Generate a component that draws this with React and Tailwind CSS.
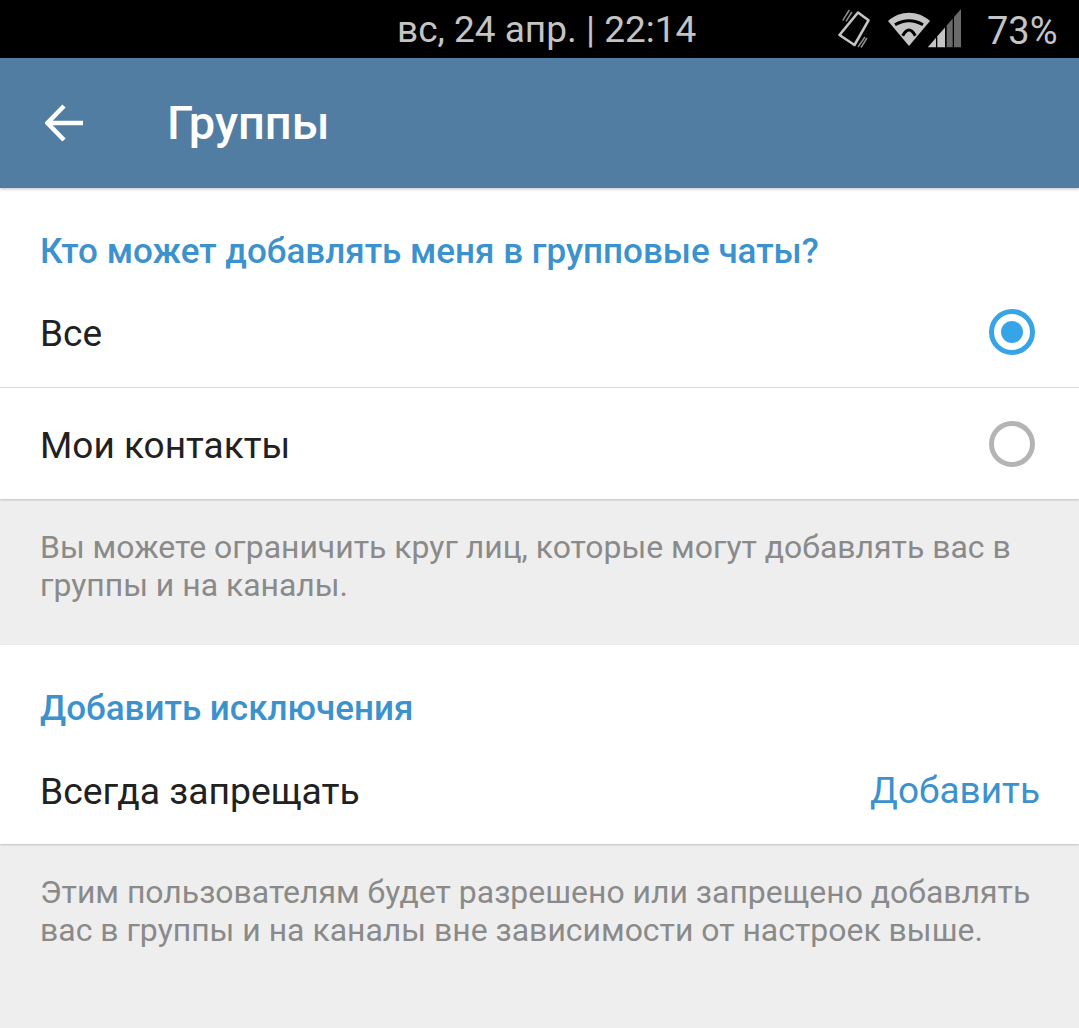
import React from 'react';

const font = { fontFamily: 'Roboto, sans-serif' };

function StatusBar() {
  return (
    <div className="relative h-[58px] bg-black text-[#c4c4c4] flex items-center">
      <div className="w-full pl-[397px] text-[37px] leading-none">вс, 24 апр. | 22:14</div>
      {/* vibrate icon */}
      <svg className="absolute left-[836px] top-[8px]" width="36" height="42" viewBox="0 0 36 42" fill="none">
        <path d="M22 4.5 L32.5 12.3 L18.5 37 L3.5 27 Z" stroke="#c4c4c4" strokeWidth="2.6" strokeLinejoin="round" />
        <path d="M6.7 12.7 L13.3 2 M10 13.3 L16 4 M22 39 L29 29 M25 39.5 L31 30" stroke="#8c8c8c" strokeWidth="1.5" />
      </svg>
      {/* wifi */}
      <svg className="absolute left-[886px] top-[10px]" width="46" height="38" viewBox="0 0 46 38" fill="none">
        <path d="M23 36 L2 11 C14 0 32 0 44 11 Z" fill="#c4c4c4" />
        <path d="M9 14.7 Q23 6.7 37 14.7" stroke="black" strokeWidth="3" />
        <path d="M16.7 25.7 Q23 14.3 29.3 25.7" stroke="black" strokeWidth="3" />
      </svg>
      {/* signal bars */}
      <svg className="absolute left-[926px] top-[9px]" width="36" height="39" viewBox="0 0 36 39">
        <path d="M1.7 38.3 L10 28.8 V38.3 Z" fill="#c4c4c4" />
        <path d="M11.3 27.3 L19 18.4 V38.3 H11.3 Z" fill="#c4c4c4" />
        <path d="M20.7 16.5 L26.7 9.6 V38.3 H20.7 Z" fill="#6a6a6a" />
        <path d="M28 8 L35 0 V38.3 H28 Z" fill="#6a6a6a" />
      </svg>
      <div className="absolute left-[987px] top-[12px] text-[38px] leading-none">73%</div>
    </div>
  );
}

function Header() {
  return (
    <div className="h-[130px] bg-[#517da2] flex items-center shadow-[0_1px_3px_rgba(0,0,0,0.25)] relative">
      <svg className="ml-[45px]" width="39" height="38" viewBox="0 0 39 38" fill="none">
        <path d="M19 2 L2.5 19 L19 36 M2.5 19 H38" stroke="white" strokeWidth="4.5" />
      </svg>
      <div className="ml-[83px] text-white text-[47px] font-medium leading-none pb-[2px]">Группы</div>
    </div>
  );
}

function Radio({ checked }) {
  return (
    <div className={`w-[46px] h-[46px] rounded-full border-[5px] flex items-center justify-center ${checked ? 'border-[#37a4e7]' : 'border-[#b4b4b4]'}`}>
      {checked && <div className="w-[22px] h-[22px] rounded-full bg-[#37a4e7]" />}
    </div>
  );
}

function Row({ label, checked }) {
  return (
    <div className="h-[111px] flex items-center justify-between pl-[40px] pr-[44px]">
      <span className="text-[37px] text-[#212121] leading-none pt-[3px]">{label}</span>
      <Radio checked={checked} />
    </div>
  );
}

function Hint({ children, className }) {
  return (
    <div className={`px-[40px] text-[31.95px] leading-[38px] text-[#8a8a8a] ${className}`}>{children}</div>
  );
}

export default function App() {
  return (
    <div className="w-[1079px] h-[1028px] overflow-hidden bg-[#eeeeee]" style={font}>
      <StatusBar />
      <Header />

      <div className="bg-white shadow-[0_1px_2px_rgba(0,0,0,0.2)]">
        <div className="pt-[44px] pl-[40px] h-[88px] text-[35px] font-medium text-[#3c92cd] leading-[40px]">
          Кто может добавлять меня в групповые чаты?
        </div>
        <Row label="Все" checked />
        <div className="h-px bg-[#dcdcdc]" />
        <Row label="Мои контакты" />
      </div>

      <Hint className="pt-[29px] pb-[41px]">
        Вы можете ограничить круг лиц, которые могут добавлять вас в группы и на каналы.
      </Hint>

      <div className="bg-white h-[199px] shadow-[0_1px_2px_rgba(0,0,0,0.2)]">
        <div className="pt-[44px] pl-[40px] text-[35px] font-medium text-[#3c92cd] leading-[40px]">
          Добавить исключения
        </div>
        <div className="flex items-center justify-between pl-[40px] pr-[39px] mt-[42px]">
          <span className="text-[37.3px] text-[#212121] leading-[40px]">Всегда запрещать</span>
          <span className="text-[37px] text-[#3c92cd] leading-[40px]">Добавить</span>
        </div>
      </div>

      <Hint className="pt-[29px]">
        Этим пользователям будет разрешено или запрещено добавлять вас в группы и на каналы вне зависимости от настроек выше.
      </Hint>
    </div>
  );
}
